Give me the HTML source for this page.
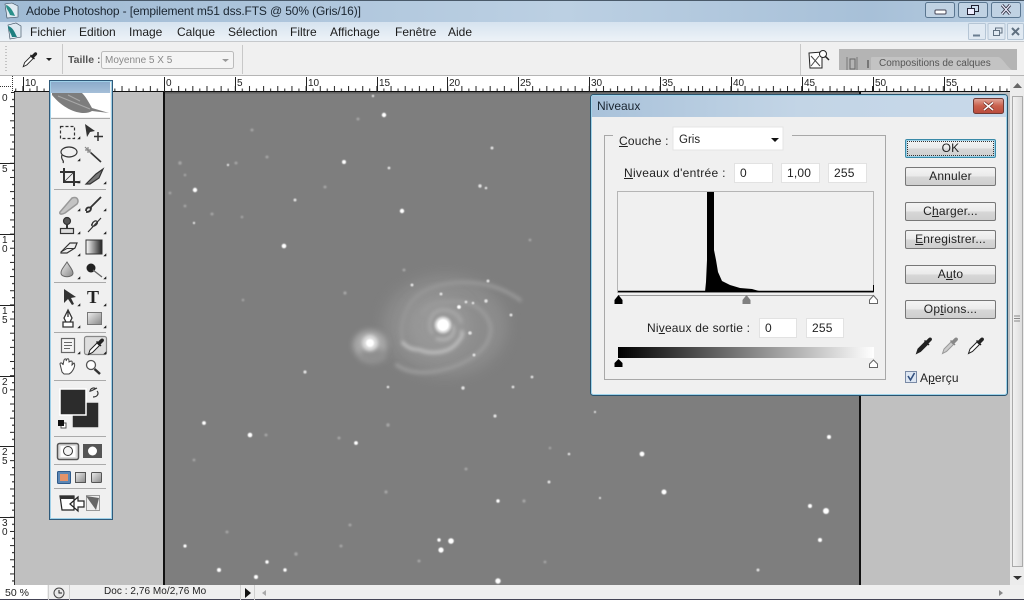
<!DOCTYPE html>
<html><head><meta charset="utf-8"><style>
html,body{margin:0;padding:0}
body{width:1024px;height:600px;overflow:hidden;position:relative;background:#c0c0c0;font-family:"Liberation Sans",sans-serif;color:#222;font-size:12px}
.a{position:absolute;white-space:nowrap}
u{text-decoration:underline}
.btn{position:absolute;left:905px;width:89px;height:17px;border:1px solid #777;border-radius:2px;background:linear-gradient(#f4f4f4 0,#ebebeb 45%,#d6d6d6 55%,#cfcfcf 100%);text-align:center;font-size:12px;line-height:17px;letter-spacing:.2px;color:#222}
.in{position:absolute;background:#fff;height:20px;border:1px solid #e2e2e2;box-sizing:border-box;line-height:18px;padding-left:5px;font-size:12px;letter-spacing:.2px}
.m{position:absolute;top:25px;font-size:12px;color:#1c1c1c}
</style></head><body>
<svg class="a" style="left:0;top:0" width="1024" height="600" viewBox="0 0 1024 600" font-family="Liberation Sans, sans-serif">
<defs>
<linearGradient id="tbh" x1="0" x2="1" y1="0" y2="0"><stop offset="0" stop-color="#9fbad4"/><stop offset=".55" stop-color="#bcd0e3"/><stop offset=".85" stop-color="#a7c0d8"/><stop offset="1" stop-color="#b7cce0"/></linearGradient>
<linearGradient id="mb" x1="0" x2="0" y1="0" y2="1"><stop offset="0" stop-color="#d6e3ef"/><stop offset="1" stop-color="#eef3f8"/></linearGradient>
<linearGradient id="dt" x1="0" x2="1" y1="0" y2="0"><stop offset="0" stop-color="#a9c2da"/><stop offset=".5" stop-color="#c3d5e6"/><stop offset="1" stop-color="#c8d9ea"/></linearGradient>
<linearGradient id="grd" x1="0" x2="1" y1="0" y2="0"><stop offset="0" stop-color="#000"/><stop offset="1" stop-color="#fff"/></linearGradient>
<linearGradient id="tool" x1="0" x2="0" y1="0" y2="1"><stop offset="0" stop-color="#8cabcb"/><stop offset="1" stop-color="#a5bfd8"/></linearGradient>
<linearGradient id="g2" x1="0" x2="1" y1="0" y2="0"><stop offset="0" stop-color="#fff"/><stop offset="1" stop-color="#222"/></linearGradient>
<linearGradient id="g3" x1="0" x2="1" y1="0" y2="1"><stop offset="0" stop-color="#eee"/><stop offset="1" stop-color="#888"/></linearGradient>
<linearGradient id="cl" x1="0" x2="0" y1="0" y2="1"><stop offset="0" stop-color="#e2a99c"/><stop offset=".5" stop-color="#c9604c"/><stop offset="1" stop-color="#b94a3c"/></linearGradient>
<linearGradient id="sb" x1="0" x2="1" y1="0" y2="0"><stop offset="0" stop-color="#f3f3f3"/><stop offset="1" stop-color="#dcdcdc"/></linearGradient>
<pattern id="rt" x="164" y="76" width="14.16" height="16" patternUnits="userSpaceOnUse"><path d="M.5 10V16M7.5 12.5V16" stroke="#222" fill="none"/></pattern>
<pattern id="rl" x="0" y="92" width="14" height="14.16" patternUnits="userSpaceOnUse"><path d="M10 .5H14M12 7.5H14" stroke="#222" fill="none"/></pattern>
<filter id="b0" x="-80%" y="-80%" width="260%" height="260%"><feGaussianBlur stdDeviation=".45"/></filter>
<filter id="b1" x="-80%" y="-80%" width="260%" height="260%"><feGaussianBlur stdDeviation=".8"/></filter>
<filter id="b3" x="-50%" y="-50%" width="200%" height="200%"><feGaussianBlur stdDeviation="3"/></filter>
<filter id="b2" x="-50%" y="-50%" width="200%" height="200%"><feGaussianBlur stdDeviation="1.800"/></filter>
<filter id="b8" x="-50%" y="-50%" width="200%" height="200%"><feGaussianBlur stdDeviation="7"/></filter>
<radialGradient id="gc"><stop offset="0" stop-color="#fff"/><stop offset=".45" stop-color="#fff"/><stop offset=".7" stop-color="#c8c8c8"/><stop offset="1" stop-color="#999" stop-opacity="0"/></radialGradient>
<symbol id="ed" viewBox="0 0 20 20"><path d="M2.5 18.5L4 14L11 7L13.5 9.5L6.5 16.5Z" fill="#fff" stroke="#222"/><path d="M10 6L14.5 10.5L15.5 9.5L14.5 8.5L17.5 5.5C19 3.5 16.5 1.5 14.8 3L12 5.8L11 5Z" fill="#222"/></symbol>
<symbol id="edb" viewBox="0 0 20 20"><path d="M2.5 18.5L4 14L11 7L13.5 9.5L6.5 16.5Z" fill="#222" stroke="#222"/><path d="M10 6L14.5 10.5L15.5 9.5L14.5 8.5L17.5 5.5C19 3.5 16.5 1.5 14.8 3L12 5.8L11 5Z" fill="#222"/></symbol>
<symbol id="edg" viewBox="0 0 20 20"><path d="M2.5 18.5L4 14L11 7L13.5 9.5L6.5 16.5Z" fill="#ccc" stroke="#999"/><path d="M10 6L14.5 10.5L15.5 9.5L14.5 8.5L17.5 5.5C19 3.5 16.5 1.5 14.8 3L12 5.8L11 5Z" fill="#888"/></symbol>
</defs>

<rect width="1024" height="600" fill="#c0c0c0"/>
<rect width="1024" height="22" fill="url(#tbh)"/>
<rect width="1024" height="1" fill="#4a5a6a"/>
<rect y="22" width="1024" height="20" fill="url(#mb)"/>
<rect y="41.500" width="1024" height="1" fill="#a0a0a0"/>
<rect y="42" width="1024" height="34" fill="#f0f0f0"/>
<rect y="75" width="1024" height="1" fill="#b5b5b5"/>
<rect y="76" width="1010" height="16" fill="#fff"/>
<rect x="14" y="76" width="996" height="16" fill="url(#rt)"/>
<path d="M14 91.500H1010" stroke="#111"/>
<rect x="0" y="92" width="14" height="493" fill="#fff"/>
<rect x="0" y="92" width="14" height="493" fill="url(#rl)"/>
<path d="M0 86.500H14M12.500 76V92" stroke="#333" stroke-dasharray="1 1"/>
<g font-size="10" fill="#222">
<path d="M23.500 77V92M164.500 77V92M235.500 77V92M306.500 77V92M377.500 77V92M447.500 77V92M518.500 77V92M589.500 77V92M660.500 77V92M731.500 77V92M802.500 77V92M873.500 77V92M944.500 77V92" stroke="#222"/>
<text x="25" y="86">10</text><text x="166" y="86">0</text><text x="237" y="86">5</text><text x="308" y="86">10</text><text x="379" y="86">15</text><text x="449" y="86">20</text><text x="520" y="86">25</text><text x="591" y="86">30</text><text x="662" y="86">35</text><text x="733" y="86">40</text><text x="804" y="86">45</text><text x="875" y="86">50</text><text x="946" y="86">55</text>
<rect x="0" y="92" width="11" height="10" fill="#fff"/><text x="2" y="101">0</text>
<text x="2" y="172">5</text>
<text x="2" y="243">1</text><text x="2" y="252">0</text>
<text x="2" y="314">1</text><text x="2" y="323">5</text>
<text x="2" y="385">2</text><text x="2" y="394">0</text>
<text x="2" y="455">2</text><text x="2" y="464">5</text>
<text x="2" y="526">3</text><text x="2" y="535">0</text>
<path d="M0 163.500H14M0 234.500H14M0 305.500H14M0 376.500H14M0 446.500H14M0 517.500H14" stroke="#222"/>
</g>
<rect x="14" y="92" width="996" height="493" fill="#c0c0c0"/>
<rect x="14" y="92" width="1" height="493" fill="#333"/>

<!-- image -->
<rect x="163" y="92" width="2" height="493" fill="#111"/>
<rect x="859" y="92" width="2" height="493" fill="#111"/>
<rect x="165" y="92" width="694" height="493" fill="#7e7e7e"/>
<rect x="165" y="92" width="694" height="1.500" fill="#5f5f5f"/>
<ellipse cx="445" cy="326" rx="62" ry="50" fill="#8c8c8c" filter="url(#b8)"/>
<ellipse cx="438" cy="326" rx="32" ry="30" fill="#979797" filter="url(#b8)"/>
<g fill="none" stroke-linecap="round" filter="url(#b2)">
<path d="M403 343C398 322 408 298 427 290C450 279 490 278 520 300" stroke="#969696" stroke-width="4"/>
<path d="M403 343C410 350 415 349 420 350C430 354 448 354 457 343C461 338 463 336 462 332" stroke="#bdbdbd" stroke-width="3.500"/>
<path d="M423 313C428 304 440 302 450 302C468 300 483 306 490 324C494 342 478 358 453 367C435 373 412 376 397 365" stroke="#9a9a9a" stroke-width="4"/>
<path d="M432 333C427 325 430 312 441 310C452 309 460 316 461 322" stroke="#a8a8a8" stroke-width="3"/>
<path d="M437 339C450 342 456 334 453 326" stroke="#b4b4b4" stroke-width="3"/>
</g>
<ellipse cx="370" cy="345" rx="17" ry="15" fill="#a8a8a8" filter="url(#b3)"/>
<ellipse cx="373" cy="356" rx="14" ry="8" fill="#8f8f8f" filter="url(#b3)"/>
<circle cx="370" cy="343" r="8" fill="#dedede" filter="url(#b2)"/>
<circle cx="370" cy="343" r="4" fill="#fff" filter="url(#b1)"/>
<circle cx="443" cy="325" r="11" fill="url(#gc)"/>
<g fill="#fff" filter="url(#b0)">
<circle cx="384" cy="115" r="2.200"/><circle cx="344" cy="162" r="2"/><circle cx="195" cy="190" r="2.200"/><circle cx="402" cy="211" r="2.200"/><circle cx="284" cy="246" r="2.300"/><circle cx="250" cy="435" r="2.300"/><circle cx="356" cy="443" r="1.900"/><circle cx="451" cy="541" r="2.800"/><circle cx="441" cy="550" r="2.600"/><circle cx="439" cy="540" r="1.700"/><circle cx="498" cy="581" r="2.700"/><circle cx="219" cy="570" r="2"/><circle cx="256" cy="577" r="2"/><circle cx="267" cy="562" r="1.700"/><circle cx="285" cy="570" r="1.700"/><circle cx="185" cy="546" r="1.600"/><circle cx="204" cy="423" r="1.900"/><circle cx="498" cy="501" r="1.700"/><circle cx="642" cy="454" r="2.400"/><circle cx="664" cy="492" r="2.500"/><circle cx="826" cy="511" r="3"/><circle cx="810" cy="506" r="2"/><circle cx="829" cy="437" r="2"/><circle cx="820" cy="540" r="2"/>
<circle cx="459" cy="307" r="1.900"/><circle cx="443" cy="281" r="0"/>
</g>
<g fill="#e0e0e0" filter="url(#b0)">
<circle cx="295" cy="200" r="1.500"/><circle cx="389" cy="168" r="1.400"/><circle cx="373" cy="96" r="1.200"/><circle cx="194" cy="223" r="1.200"/><circle cx="549" cy="482" r="1.500"/><circle cx="569" cy="454" r="1.300"/><circle cx="228" cy="165" r="1.200"/><circle cx="412" cy="285" r="1.500"/><circle cx="441" cy="294" r="1.500"/><circle cx="466" cy="302" r="1.400"/><circle cx="473" cy="303" r="1.300"/><circle cx="486" cy="301" r="1.700"/><circle cx="488" cy="281" r="1.500"/><circle cx="511" cy="315" r="1.500"/><circle cx="470" cy="333" r="1.800"/><circle cx="474" cy="355" r="1.500"/><circle cx="463" cy="388" r="1.700"/><circle cx="513" cy="387" r="1.400"/><circle cx="388" cy="387" r="1.300"/><circle cx="480" cy="186" r="1.700"/><circle cx="486" cy="188" r="1.300"/><circle cx="492" cy="148" r="1.500"/><circle cx="495" cy="416" r="1.600"/><circle cx="532" cy="377" r="1.400"/><circle cx="305" cy="372" r="1.600"/><circle cx="758" cy="570" r="1.500"/><circle cx="600" cy="498" r="1.100"/><circle cx="595" cy="412" r="1.100"/>
</g>
<g fill="#a6a6a6" filter="url(#b1)">
<circle cx="358" cy="119" r="1.500"/><circle cx="267" cy="157" r="1.500"/><circle cx="236" cy="163" r="1.500"/><circle cx="180" cy="163" r="1.700"/><circle cx="185" cy="175" r="1.300"/><circle cx="170" cy="193" r="1.400"/><circle cx="185" cy="206" r="1.400"/><circle cx="212" cy="214" r="1.500"/><circle cx="242" cy="217" r="1.300"/><circle cx="325" cy="187" r="1.500"/><circle cx="252" cy="130" r="1.500"/><circle cx="339" cy="438" r="1.500"/><circle cx="266" cy="435" r="1.500"/><circle cx="388" cy="425" r="1.700"/><circle cx="194" cy="460" r="1.400"/><circle cx="466" cy="469" r="1.500"/><circle cx="524" cy="501" r="1.600"/><circle cx="386" cy="492" r="1.600"/><circle cx="227" cy="532" r="1.500"/><circle cx="341" cy="546" r="1.500"/><circle cx="296" cy="554" r="1.700"/><circle cx="550" cy="448" r="1.300"/><circle cx="419" cy="561" r="1.500"/><circle cx="545" cy="562" r="1.400"/><circle cx="350" cy="525" r="1.500"/><circle cx="345" cy="293" r="1.600"/><circle cx="404" cy="270" r="1.500"/><circle cx="530" cy="240" r="1.400"/><circle cx="243" cy="300" r="1.300"/>
</g>

<!-- toolbox -->
<rect x="49.500" y="80.500" width="63" height="439" fill="#f0f0f0" stroke="#2f5a7a"/>
<rect x="50.500" y="81.500" width="61" height="437" fill="none" stroke="#9fd0e8"/>
<rect x="51" y="82" width="59" height="11" fill="url(#tool)"/>
<rect x="51" y="93" width="59" height="24" fill="#fff"/>
<path d="M52 93H82C86 97 88 101 92 108L109 113L92 111C84 116 66 112 52 95Z" fill="#7d7d7d"/>
<path d="M58 96L90 109M68 95L80 101" stroke="#a8a8a8" fill="none" stroke-width="1"/>
<path d="M51 118.500H110M54 189.500H106M54 282.500H106M54 332.500H106M54 380.500H106M54 436.500H106M54 464.500H106M54 488.500H106" stroke="#aaa"/>
<g fill="none" stroke="#333" stroke-width="1.200">
<rect x="60.500" y="126.500" width="14" height="12" stroke-dasharray="3 2"/>
<path d="M85 124L95 131L90 132L87 137Z" fill="#333" stroke="none"/><path d="M98 132V141M94 136.500H103" stroke-width="1.500"/>
<ellipse cx="69" cy="152" rx="8" ry="5"/><path d="M62 155C60 160 65 160 63 163"/>
<path d="M90 152L101 162" stroke-width="1.600"/><path d="M88 147V153M85 150H91M85 147L91 153" stroke="#888"/>
<path d="M64 168V182H79M60 172H74V186" stroke-width="2"/><path d="M64 182L74 172" stroke-width=".8"/>
<path d="M86 184L96 174L103 169L99 178L90 184Z" fill="#777"/>
<path d="M60 212L72 198C78 196 79 201 77 204L65 213C61 215 59 214 60 212Z" fill="#c4c4c4" stroke="#999" stroke-width="1.500"/>
<path d="M90 208L101 197M86 211C86 207 89 207 91 208C91 211 89 212 86 212" stroke-width="1.800"/>
<circle cx="67" cy="221" r="3.500" fill="#555"/><path d="M67 224V228" stroke-width="2"/><rect x="60.500" y="228.500" width="13" height="5" fill="#ddd"/>
<path d="M88 232L101 218M92 224C95 218 100 222 96 225C92 228 90 224 93 224" stroke-width="1.200"/>
<path d="M61 252L70 243H77L75 248L67 253H61Z" fill="#eee"/><path d="M61 252L67 248.500H75" stroke-width="1"/>
<path d="M67 262C63 268 61 270 61 273C61 278 73 278 73 273C73 270 70 267 67 262Z" fill="url(#g3)" stroke="#666" stroke-width="1"/>
<circle cx="91" cy="268" r="4.500" fill="#222" stroke="none"/><path d="M93 270L102 277" stroke-width="1.300" stroke="#666"/>
<path d="M64 289L64 303L68 299L72 305L74 304L71 298L76 297Z" fill="#333" stroke="none"/>
<path d="M68 310L64 318L66 322H70L72 318ZM68 310V317M63 322H73V327H63Z" stroke-width="1.300" fill="#fff"/>
<rect x="61.500" y="338.500" width="13" height="14" fill="#f4f4f4" stroke="#666"/><path d="M64 342.500H72M64 345.500H72M64 348.500H70" stroke-width="1" stroke="#666"/>
<rect x="84.500" y="336.500" width="22" height="18" rx="2" fill="#dedede" stroke="#888"/>
<path d="M62 372L60 364C60 362 63 363 63 365L64 360C65 358 67 359 66 361L67 359C69 358 69 360 69 362L71 361C73 361 72 363 72 365L74 363C76 365 73 372 69 374H64Z" fill="#fff" stroke="#444" stroke-width="1"/>
<circle cx="91" cy="365" r="4.500" fill="#fff" stroke="#555" stroke-width="1.300"/><path d="M94.500 369L100 374" stroke-width="2.500"/>
</g>
<text x="87" y="303" font-family="Liberation Serif" font-size="18" font-weight="bold" fill="#222">T</text>
<rect x="87.500" y="312.500" width="14" height="12" fill="url(#g3)" stroke="#777"/>
<rect x="86" y="240" width="16" height="14" fill="url(#g2)" stroke="#333"/>
<use href="#ed" x="86" y="336" width="20" height="20"/>
<use href="#ed" x="21" y="50" width="18" height="18"/>
<path d="M78 139l2 0 0 -2zM78 161l2 0 0 -2zM78 183l2 0 0 -2zM104 184l2 0 0 -2zM78 211l2 0 0 -2zM104 211l2 0 0 -2zM78 234l2 0 0 -2zM104 234l2 0 0 -2zM78 256l2 0 0 -2zM104 256l2 0 0 -2zM78 279l2 0 0 -2zM104 279l2 0 0 -2zM78 306l2 0 0 -2zM104 306l2 0 0 -2zM78 328l2 0 0 -2zM104 328l2 0 0 -2zM78 354l2 0 0 -2zM104 354l2 0 0 -2z" fill="#222" stroke="#222" stroke-width=".6"/>
<rect x="72" y="402" width="27" height="26" fill="#2c2c2c" stroke="#eee" stroke-width="1.500"/>
<rect x="60" y="389" width="26" height="26" fill="#2c2c2c" stroke="#fff" stroke-width="1.500"/>
<path d="M91 391L97 388M93 397C98 397 99 393 97 391M90 392C90 388 94 387 96 389" stroke="#333" fill="none" stroke-width="1.200"/>
<rect x="61" y="423" width="5" height="5" fill="#fff" stroke="#555"/><rect x="58" y="420" width="6" height="6" fill="#111"/>
<rect x="57.500" y="443.500" width="21" height="16" rx="2" fill="#dcdcdc" stroke="#555" stroke-width="1.500"/><rect x="60.500" y="446" width="15" height="11" fill="#fff"/><circle cx="68" cy="451" r="4.500" fill="#f4f4f4" stroke="#333"/>
<rect x="83" y="444" width="19" height="14" fill="#555"/><circle cx="92.500" cy="451" r="4.500" fill="#fff"/>
<rect x="57.500" y="471.500" width="13" height="12" rx="1" fill="#5c87b5" stroke="#2f5a8a"/><rect x="60" y="474" width="8" height="7" fill="#e4936a"/>
<rect x="75.500" y="472.500" width="10" height="10" fill="url(#g3)" stroke="#555"/><rect x="91.500" y="472.500" width="10" height="10" rx="1" fill="url(#g3)" stroke="#555"/>
<path d="M60 496H74V510H62ZM70 504L78 497V501H84V507H78V511Z" fill="#fff" stroke="#222" stroke-width="1.200"/><rect x="60" y="496" width="14" height="3" fill="#333"/>
<rect x="86.500" y="495.500" width="13" height="15" fill="#eee" stroke="#999"/><path d="M86 496L96 510L99 498Z" fill="#666"/>

<!-- window icons -->
<path d="M5 4L12 3L18 6V17L7 18Z" fill="#dfeaf2" stroke="#345" stroke-width=".6"/><path d="M6 5C10 6 13 11 15 16L10 15C9 11 6 9 6 5Z" fill="#2a8f8a"/>
<path d="M8 25L16 23L21 26V37L10 39Z" fill="#dfeaf2" stroke="#345" stroke-width=".6"/><path d="M8 26C13 27 15 33 17 37L12 37C11 33 8 30 8 26Z" fill="#1d7f80"/>
<g stroke="#5a7690" fill="#c0d2e3"><rect x="925.500" y="2.500" width="29" height="15" rx="2"/><rect x="958.500" y="2.500" width="29" height="15" rx="2"/><rect x="991.500" y="2.500" width="29" height="15" rx="2"/></g>
<rect x="935" y="10" width="11" height="4" rx="1" fill="#fff" stroke="#445"/>
<g fill="none" stroke="#223" stroke-width="1"><rect x="971.500" y="5.500" width="7" height="6" fill="#cde"/><rect x="967.500" y="8.500" width="7" height="6" fill="#eef"/></g>
<path d="M1002 5L1010 14M1010 5L1002 14" stroke="#334" stroke-width="3"/><path d="M1002 5L1010 14M1010 5L1002 14" stroke="#eef" stroke-width="1.300"/>
<g stroke="#b5c5d5" fill="#e0e9f2"><rect x="968.500" y="23.500" width="17" height="16" rx="1"/><rect x="988" y="23.500" width="17" height="16" rx="1"/><rect x="1007.500" y="23.500" width="16" height="16" rx="1"/></g>
<path d="M973 35.500H980" stroke="#6a7d90" stroke-width="2"/><rect x="993.500" y="30.500" width="6" height="5" fill="none" stroke="#607080"/><path d="M995.500 30V28H1002V33H1000" fill="none" stroke="#607080"/>
<path d="M1012 28L1019 35M1019 28L1012 35" stroke="#607080" stroke-width="2"/>

<!-- toolbar -->
<path d="M6 46V72" stroke="#999" stroke-dasharray="1 2"/>
<path d="M62.500 44V74M242.500 45V74M800.500 44V75" stroke="#c8c8c8"/>
<path d="M46 58h6l-3 3z" fill="#222"/>
<rect x="101.500" y="51.500" width="132" height="17" rx="2" fill="#f4f4f4" stroke="#bbb"/>
<path d="M222 59h7l-3.500 3z" fill="#999"/>
<path d="M809 53L822 52V68H810Z" fill="#fff" stroke="#222"/><path d="M811 56L820 66M811 66L819 56" stroke="#444"/><circle cx="823" cy="54" r="3.500" fill="#fff" stroke="#222"/><path d="M825 56L829 60" stroke="#222" stroke-width="1.500"/>
<rect x="839" y="49" width="178" height="21" fill="#b4b4b4"/>
<path d="M871 70V58C871 57 872 57 873 57H998C1002 57 1006 66 1012 70Z" fill="#c3c3c3"/>
<path d="M847 57V70M857 57V70" stroke="#777"/><rect x="850" y="59" width="5" height="10" fill="none" stroke="#666"/><path d="M868 60V68" stroke="#777" stroke-width="2"/>

<!-- scrollbar -->
<rect x="1010" y="76" width="14" height="509" fill="#ececec"/>
<path d="M1013 88h9l-4.500-5z" fill="#666"/>
<rect x="1012.500" y="96.500" width="10" height="470" fill="url(#sb)" stroke="#aaa"/>
<path d="M1014 316H1020M1014 318.500H1020M1014 321H1020" stroke="#888"/>
<path d="M1013 576h9l-4.500 4z" fill="#333"/>

<!-- status -->
<rect y="585" width="1024" height="14" fill="#efefef"/>
<rect y="585" width="47" height="15" fill="#fff"/>
<path d="M0 599.500H1024" stroke="#445" stroke-width="1"/>
<path d="M48.500 585V600M69.500 585V600M240.500 585V600M254.500 585V600" stroke="#d0d0d0"/>
<circle cx="59" cy="593" r="5" fill="#e8e8e8" stroke="#444"/><path d="M59 590V593H62" fill="none" stroke="#222"/>
<path d="M245 588L251 593L245 598Z" fill="#111"/>
<path d="M266 590L262 593L266 596Z" fill="#aaa"/><path d="M999 590L1003 593L999 596Z" fill="#888"/>

<!-- dialog -->
<rect x="590.500" y="94.500" width="417" height="301" rx="3" fill="#f0f0f0" stroke="#29536e"/>
<rect x="591.500" y="95.500" width="415" height="299" rx="2" fill="none" stroke="#9fd3ea"/>
<rect x="592" y="96" width="414" height="21" fill="url(#dt)"/>
<rect x="973.500" y="98.500" width="30" height="15" rx="2" fill="url(#cl)" stroke="#6e3a35"/>
<path d="M984 102.500L993 110M993 102.500L984 110" stroke="#6b2a22" stroke-width="3"/><path d="M984 102.500L993 110M993 102.500L984 110" stroke="#fff" stroke-width="1.500"/>
<path d="M613 135.500H604.500V379.500H885.500V135.500H792" fill="none" stroke="#a8a8a8"/>
<rect x="673" y="127" width="110" height="23" fill="#fff" stroke="#e4e4e4"/>
<path d="M771 138h8l-4 4z" fill="#111"/>
<rect x="617.500" y="191.500" width="256" height="101" fill="#f0f0f0" stroke="#b5b5b5"/>
<path d="M618 291.500H873.500" stroke="#000" stroke-width="1.500"/>
<path d="M873.500 285V292" stroke="#000"/>
<path d="M705 292L706 282L707 260L707 192H714V250L716 260L718 272L722 281L730 285L740 288L752 289L759 291V292Z" fill="#000"/>
<path d="M618.500 295.500H873.500" stroke="#999"/>
<path d="M618.500 295L622.500 300V304H614.500V300Z" fill="#000"/>
<path d="M746.500 295L750.500 300V304H742.500V300Z" fill="#808080"/>
<path d="M873.500 295.500L877.500 300V303.500H869.500V300Z" fill="#fff" stroke="#666"/>
<rect x="618" y="347" width="256" height="11" fill="url(#grd)"/>
<path d="M618.500 359L622.500 363V367H614.500V363Z" fill="#000"/>
<path d="M873.500 360L877.500 364V367.500H869.500V364Z" fill="#fff" stroke="#666"/>
<use href="#edb" x="914" y="335" width="20" height="20"/>
<use href="#edg" x="940" y="335" width="20" height="20"/>
<use href="#ed" x="966" y="335" width="20" height="20"/>
<rect x="905.500" y="371.500" width="11" height="11" fill="#dde6f2" stroke="#7a8aa5"/>
<path d="M908 376L910.500 380L914.500 373" fill="none" stroke="#33507f" stroke-width="1.600"/>
</svg>

<div class="a" style="left:26px;top:4px;font-size:12px;letter-spacing:-.13px;color:#1a2530">Adobe Photoshop - [empilement m51 dss.FTS @ 50% (Gris/16)]</div>
<div class="m" style="left:30px">Fichier</div><div class="m" style="left:79px">Edition</div><div class="m" style="left:129px">Image</div><div class="m" style="left:177px">Calque</div><div class="m" style="left:228px">Sélection</div><div class="m" style="left:290px">Filtre</div><div class="m" style="left:330px">Affichage</div><div class="m" style="left:395px">Fenêtre</div><div class="m" style="left:448px">Aide</div>
<div class="a" style="left:68px;top:54px;font-size:10.500px;font-weight:bold;color:#555">Taille :</div>
<div class="a" style="left:105px;top:55px;font-size:10px;letter-spacing:0;color:#888">Moyenne 5 X 5</div>
<div class="a" style="left:879px;top:58px;font-size:10px;color:#555">Compositions de calques</div>
<div class="a" style="left:5px;top:587px;font-size:10.500px;color:#222">50 %</div>
<div class="a" style="left:104px;top:586px;font-size:10px;letter-spacing:.05px;color:#222">Doc : 2,76 Mo/2,76 Mo</div>

<div class="a" style="left:597px;top:99px;font-size:12px;color:#1a2530">Niveaux</div>
<div class="a" style="left:619px;top:134px;letter-spacing:.2px"><u>C</u>ouche :</div>
<div class="a" style="left:679px;top:134px;font-size:11.500px">Gris</div>
<div class="a" style="left:624px;top:166px;letter-spacing:.3px"><u>N</u>iveaux d'entrée :</div>
<div class="in" style="left:734px;top:163px;width:39px">0</div>
<div class="in" style="left:781px;top:163px;width:39px">1,00</div>
<div class="in" style="left:828px;top:163px;width:39px">255</div>
<div class="a" style="left:647px;top:321px;letter-spacing:.2px">Ni<u>v</u>eaux de sortie :</div>
<div class="in" style="left:759px;top:318px;width:38px">0</div>
<div class="in" style="left:806px;top:318px;width:38px">255</div>
<div class="btn" style="top:139px;border-color:#3a8aa8;box-shadow:inset 0 0 0 1px #9fd3ea;outline:1px dotted #333;outline-offset:-3px">OK</div>
<div class="btn" style="top:167px">Annuler</div>
<div class="btn" style="top:202px">C<u>h</u>arger...</div>
<div class="btn" style="top:230px"><u>E</u>nregistrer...</div>
<div class="btn" style="top:265px">A<u>u</u>to</div>
<div class="btn" style="top:300px">Op<u>t</u>ions...</div>
<div class="a" style="left:920px;top:371px;letter-spacing:.1px">A<u>p</u>erçu</div>
</body></html>
